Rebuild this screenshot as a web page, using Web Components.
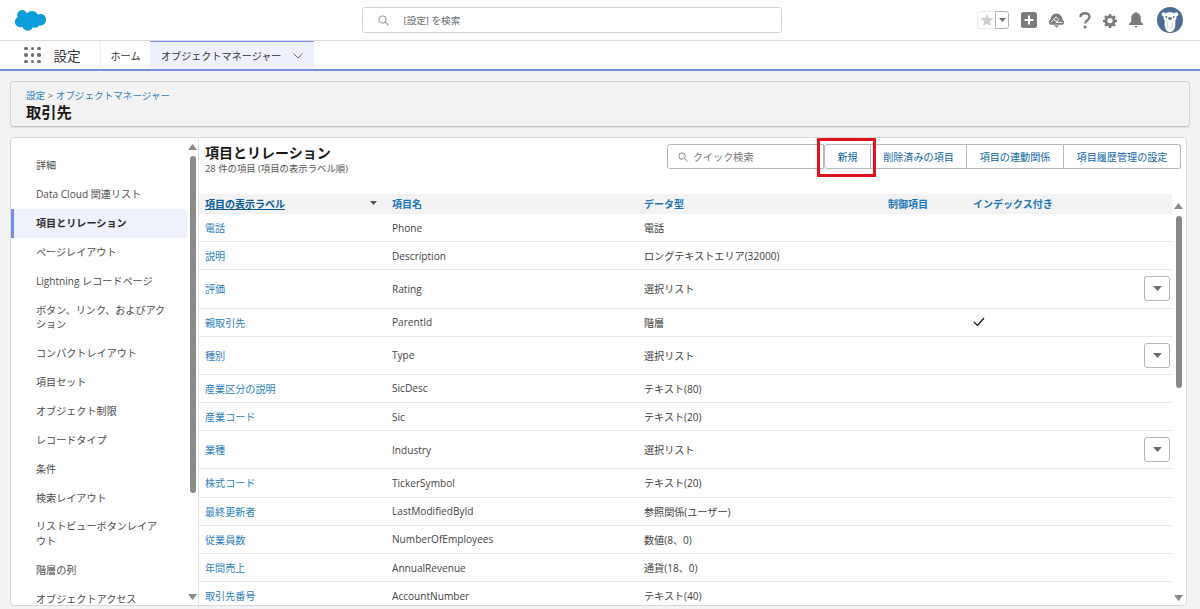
<!DOCTYPE html>
<html lang="ja"><head><meta charset="utf-8">
<style>
html,body{margin:0;padding:0;height:609px;overflow:hidden;background:#f3f3f3;}
body{font-family:"Open Sans","Noto Sans CJK JP",sans-serif;font-size:10.1px;color:#3e3e3c;}
</style></head><body>
<sf-header></sf-header>
<sf-nav></sf-nav>
<sf-title></sf-title>
<sf-main>
<sf-side>
<sf-item>詳細</sf-item>
<sf-item>Data Cloud 関連リスト</sf-item>
<sf-item active>項目とリレーション</sf-item>
<sf-item>ページレイアウト</sf-item>
<sf-item>Lightning レコードページ</sf-item>
<sf-item>ボタン、リンク、およびアク<br>ション</sf-item>
<sf-item>コンパクトレイアウト</sf-item>
<sf-item>項目セット</sf-item>
<sf-item>オブジェクト制限</sf-item>
<sf-item>レコードタイプ</sf-item>
<sf-item>条件</sf-item>
<sf-item>検索レイアウト</sf-item>
<sf-item>リストビューボタンレイア<br>ウト</sf-item>
<sf-item>階層の列</sf-item>
<sf-item>オブジェクトアクセス</sf-item>
</sf-side>
<sf-scroll style="--h:337px;--w:6px;--gap:6px;margin:6px 0 5px 0"></sf-scroll>
<sf-content>
<sf-table>
<sf-row l="電話" n="Phone" t="電話"></sf-row>
<sf-row l="説明" n="Description" t="ロングテキストエリア(32000)"></sf-row>
<sf-row tall l="評価" n="Rating" t="選択リスト"></sf-row>
<sf-row chk l="親取引先" n="ParentId" t="階層"></sf-row>
<sf-row tall l="種別" n="Type" t="選択リスト"></sf-row>
<sf-row l="産業区分の説明" n="SicDesc" t="テキスト(80)"></sf-row>
<sf-row l="産業コード" n="Sic" t="テキスト(20)"></sf-row>
<sf-row tall l="業種" n="Industry" t="選択リスト"></sf-row>
<sf-row l="株式コード" n="TickerSymbol" t="テキスト(20)"></sf-row>
<sf-row l="最終更新者" n="LastModifiedById" t="参照関係(ユーザー)"></sf-row>
<sf-row l="従業員数" n="NumberOfEmployees" t="数値(8、0)"></sf-row>
<sf-row l="年間売上" n="AnnualRevenue" t="通貨(18、0)"></sf-row>
<sf-row l="取引先番号" n="AccountNumber" t="テキスト(40)"></sf-row>
</sf-table>
</sf-content>
</sf-main>
<script>
function el(name,html){customElements.define(name,class extends HTMLElement{connectedCallback(){if(this.shadowRoot)return;const s=this.attachShadow({mode:'open'});s.innerHTML=typeof html==='function'?html(this):html;}});}
const tri=(c='#706e6b',w=7,h=4)=>`<svg width="${w}" height="${h}" viewBox="0 0 7 4"><path d="M0 0h7L3.5 4z" fill="${c}"/></svg>`;
el('sf-header',`<style>
:host{display:flex;height:40px;background:#fff;border-bottom:1px solid #dcdcdc;box-sizing:content-box;align-items:center;position:relative}
.logo{margin-left:14px;width:32px;height:22px;flex:none}
.mid{flex:1;display:flex;justify-content:center;padding-left:120px;box-sizing:border-box}
.search{width:420px;height:26px;box-sizing:border-box;border:1px solid #d4d4d4;border-radius:3px;display:flex;align-items:center;padding-left:15px;gap:15px;color:#6b6b6b;font-size:9.6px}
.tools{display:flex;align-items:center;margin-right:17px;flex:none}
.fav{display:flex;width:32px;height:18px;margin-right:12px}
.star{width:18px;height:18px;border:1px solid #ececec;border-right:0;border-radius:3px 0 0 3px;box-sizing:border-box;display:flex;align-items:center;justify-content:center}
.dd{width:14px;height:18px;border:1px solid #b5b5b5;border-radius:0 3px 3px 0;box-sizing:border-box;display:flex;align-items:center;justify-content:center}
svg{display:block;flex:none}
</style>
<svg class="logo" viewBox="0 0 32 22"><path fill="#0d9dda" d="M13 4.500C14.200 3 16 2 18 2c2.600 0 4.900 1.500 5.900 3.600.9-.4 1.800-.6 2.800-.6 3.400 0 5.300 2.600 5.300 5.700s-2.400 5.800-5.700 5.800c-.5 0-.9 0-1.300-.1-.8 1.400-2.400 2.400-4.200 2.400-.8 0-1.500-.2-2.100-.5-.8 2-2.800 3.400-5 3.400-2.400 0-4.400-1.500-5.200-3.600-.3.1-.7.1-1 .1C3.600 18.200 1 16 .9 12.900c0-2 1.100-3.800 2.700-4.800C3.300 7.400 3.200 6.600 3.200 5.900 3.200 3.100 5.500.9 8.300.9 10.200.9 11.900 2.300 13 4.500z"/></svg>
<div class="mid"><div class="search"><svg width="11" height="11" viewBox="0 0 11 11" fill="none" stroke="#9a9a9a" stroke-width="1.100"><circle cx="4.500" cy="4.500" r="3.500"/><path d="M7.200 7.200L10.500 10.500"/></svg><span>[設定] を検索</span></div></div>
<div class="tools">
<div class="fav"><div class="star"><svg width="14" height="14" viewBox="0 0 24 24"><path fill="#cfcfcf" d="M12 1.500l3.200 7.200 7.800.8-5.900 5.200 1.700 7.700L12 18.400l-6.800 4 1.700-7.700L1 9.500l7.800-.8z"/></svg></div><div class="dd">${tri('#6f6f6f')}</div></div>
<svg width="16" height="16" viewBox="0 0 16 16" style="margin-right:12px"><rect width="16" height="16" rx="2.500" fill="#7b7b7b"/><path d="M8 3.500v9M3.500 8h9" stroke="#fff" stroke-width="2"/></svg>
<svg width="15" height="15" viewBox="0 0 16 15" style="margin-right:15px"><path fill="#7b7b7b" d="M8 0c3.500 0 6 3 6.700 7 .8.500 1.300 1.400 1.300 2.500 0 1.500-1 2.500-2.200 2.500H2.200C1 12 0 11 0 9.500 0 8.400.5 7.500 1.300 7 2 3 4.500 0 8 0z"/><path fill="none" stroke="#fff" stroke-width="1" d="M2 9.500l5.500-6 3 3.200-3.200 2.800h7M5.200 6.500l4.800 3"/><path fill="#7b7b7b" d="M5 12.800h6L8 15z"/></svg>
<svg width="12" height="17" viewBox="0 0 12 17" style="margin-right:12px"><path fill="none" stroke="#7b7b7b" stroke-width="2.400" d="M1.500 5C1.500 2.700 3.500 1.300 6 1.300s4.500 1.400 4.500 3.600c0 3.100-4.300 3.300-4.300 6.600"/><circle cx="6.100" cy="15" r="1.600" fill="#7b7b7b"/></svg>
<svg width="14" height="15" viewBox="0 0 24 24" style="margin-right:12px"><path fill="#7b7b7b" fill-rule="evenodd" d="M10 1h4l.6 3 1.900.8 2.600-1.700 2.800 2.800-1.700 2.600.8 1.900 3 .6v4l-3 .6-.8 1.900 1.700 2.600-2.800 2.800-2.600-1.700-1.900.8-.6 3h-4l-.6-3-1.900-.8-2.600 1.700-2.800-2.800 1.700-2.600-.8-1.900-3-.6v-4l3-.6.8-1.900-1.700-2.600 2.800-2.800 2.600 1.700 1.900-.8zM12 7.500a4.500 4.500 0 1 0 0 9 4.500 4.500 0 0 0 0-9z"/></svg>
<svg width="14" height="16" viewBox="0 0 14 16" style="margin-right:14px"><path fill="#7b7b7b" d="M7 0c.7 0 1.200.5 1.200 1.100C10.500 1.700 11.800 3.500 11.800 6v3.500L14 12v1H0v-1l2.200-2.500V6C2.200 3.500 3.500 1.700 5.800 1.100 5.800.5 6.300 0 7 0zM5.500 14h3c0 .8-.7 1.600-1.500 1.600S5.500 14.800 5.500 14z"/></svg>
<svg width="26" height="26" viewBox="0 0 26 26"><circle cx="13" cy="13" r="13" fill="#4d6b93"/><circle cx="6.800" cy="7.300" r="2.100" fill="#fff"/><circle cx="19.200" cy="7.300" r="2.100" fill="#fff"/><path fill="#fff" d="M13 5c3.700 0 6.500 3 6.500 5.800 0 1-.5 1.900-1.200 2.600V18c0 3.600-2.200 7.200-5.300 7.200S7.700 21.600 7.700 18v-4.600C7 12.700 6.500 11.800 6.500 10.800 6.500 8 9.300 5 13 5z"/><circle cx="9.300" cy="10" r="1" fill="#4d6b93"/><circle cx="16.700" cy="10" r="1" fill="#4d6b93"/><path fill="#4d6b93" d="M11 11.300c0-.7.9-1.100 2-1.100s2 .4 2 1.100-1.200 1.700-2 1.700-2-1-2-1.700z"/><path fill="none" stroke="#b9c6d6" stroke-width=".8" d="M10 14.500c.2 4.500 1.300 6.500 3 6.500s2.800-2 3-6.500"/></svg>
</div>`);
el('sf-nav',`<style>
:host{display:flex;height:28px;background:#fff;border-bottom:2px solid #7a8ee6;align-items:stretch}
.app{width:101px;box-sizing:border-box;padding-left:24px;display:flex;align-items:center;gap:13px;border-right:1px solid #efefef;font-size:13.6px;color:#333;flex:none}
.grid{display:grid;grid-template-columns:repeat(3,3.5px);gap:3px}
.grid i{width:3.5px;height:3.5px;border-radius:50%;background:#706e6b}
.t{display:flex;align-items:center;color:#333;font-size:10.1px;white-space:nowrap}
.home{width:49px;justify-content:center;box-sizing:border-box}
.om{background:#eef1fb;border-top:1px solid #7a8ee6;width:164px;box-sizing:border-box;padding:0 11px;justify-content:space-between}
</style>
<div class="app"><div class="grid"><i></i><i></i><i></i><i></i><i></i><i></i><i></i><i></i><i></i></div><span>設定</span></div>
<div class="t home">ホーム</div>
<div class="t om"><span>オブジェクトマネージャー</span><svg width="10" height="6" viewBox="0 0 10 6" fill="none" stroke="#6b6b6b" stroke-width="1"><path d="M.5.5L5 5 9.500.5"/></svg></div>`);
el('sf-title',`<style>
:host{display:block;margin:10px;height:46px;box-sizing:border-box;border:1px solid #d5d5d5;border-bottom-color:#c4c4c4;border-radius:4px;background:#f3f3f3;padding:7px 15px 0;box-shadow:0 1px 1px rgba(0,0,0,.08)}
.c{font-size:9.6px;line-height:13px;color:#5b5b5b}
a{color:#2e7fbf;text-decoration:none}
.h{font-size:15.3px;font-weight:700;color:#181818;line-height:20px}
</style><div class="c"><a>設定</a> &gt; <a>オブジェクトマネージャー</a></div><div class="h">取引先</div>`);
el('sf-btn',`<style>
:host{display:flex;align-items:center;justify-content:center;height:25px;box-sizing:border-box;border:1px solid #b8b8b8;border-left:0;color:#0f66a8;font-size:10.1px;background:#fff;white-space:nowrap}
</style><slot></slot>`);
el('sf-side',`<style>
:host{display:flex;flex-direction:column;padding-top:13px;box-sizing:border-box;width:176px;flex:none;overflow:hidden}
</style><slot></slot>`);
el('sf-item',`<style>
:host{display:block;padding:7.1px 10px 7.1px 25px;line-height:14.7px;color:#4b4b4b;font-size:10.1px;flex:none;white-space:nowrap}
:host([active]){background:#eff2fb;box-shadow:inset 3px 0 0 #7a8ee6;font-weight:700;color:#2b2b2b}
</style><slot></slot>`);
el('sf-scroll',`<style>
:host{display:flex;flex-direction:column;align-items:center;width:11px;flex:none}
.up,.down{line-height:0;flex:none}
.track{flex:1;width:100%;padding-top:var(--gap,4px);box-sizing:border-box;display:flex;justify-content:center}
.thumb{width:var(--w,7px);height:var(--h,100px);background:#8a8a8a;border-radius:4px}
</style><div class="up"><svg width="9" height="6" viewBox="0 0 9 6"><path d="M4.5 0L9 6H0z" fill="#8a8a8a"/></svg></div><div class="track"><div class="thumb"></div></div><div class="down"><svg width="9" height="6" viewBox="0 0 9 6"><path d="M4.5 6L9 0H0z" fill="#8a8a8a"/></svg></div>`);
el('sf-row',h=>`<style>
:host{display:grid;grid-template-columns:187px 252px 244px 85px 1fr 28px;align-items:center;box-sizing:border-box;height:${h.hasAttribute('tall')?38.1:28.22}px;border-bottom:1px solid #e8e8e8;padding-left:6px;font-size:10.1px;color:#3e3e3c;flex:none}
.l{color:#2e7fbf}
.n{color:#444}
.b{width:26px;height:25px;box-sizing:border-box;border:1px solid #b5b5b5;border-radius:3px;display:flex;align-items:center;justify-content:center}
svg{display:block}
</style><div class="l">${h.getAttribute('l')}</div><div class="n">${h.getAttribute('n')}</div><div>${h.getAttribute('t')}</div><div></div><div>${h.hasAttribute('chk')?'<svg width="12" height="10" viewBox="0 0 12 10" fill="none" stroke="#222" stroke-width="1.400"><path d="M1 5l3.500 3.500L11 1"/></svg>':''}</div><div>${h.hasAttribute('tall')?`<div class="b">${tri('#6b6b6b',9,5)}</div>`:''}</div>`);
el('sf-table',`<style>
:host{display:flex;flex-direction:column;flex:1;min-width:0;overflow:hidden}
.hd{display:grid;grid-template-columns:187px 252px 244px 85px 1fr;align-items:center;height:20px;box-sizing:border-box;padding:0 0 2px 6px;background:#f3f3f3;font-size:10px;font-weight:700;color:#1b75bb;flex:none}
.first{display:flex;justify-content:space-between;align-items:center;padding-right:15px}
.first u{color:#0b5a96}
</style><div class="hd"><div class="first"><u>項目の表示ラベル</u>${tri('#555')}</div><div>項目名</div><div>データ型</div><div>制御項目</div><div>インデックス付き</div></div><slot></slot>`);
el('sf-content',`<style>
:host{display:flex;flex-direction:column;flex:1;min-width:0;border-left:1px solid #e3e3e3}
.top{height:56px;flex:none;display:flex;justify-content:space-between;padding:6px 5px 0 6px;box-sizing:border-box;position:relative}
h2{margin:0;font-size:14px;font-weight:700;color:#181818;line-height:18px}
.s{font-size:9.4px;color:#555;line-height:12px;margin-top:1px}
.acts{display:flex;height:25px}
.q{width:157px;height:25px;box-sizing:border-box;border:1px solid #b5b5b5;border-radius:3px 0 0 3px;display:flex;align-items:center;padding-left:10px;gap:5px;color:#7a7a7a;font-size:10.1px}
.mark{position:absolute;left:618px;top:0;width:59px;height:39px;box-sizing:border-box;border:3px solid #e1131f;pointer-events:none}
.body{flex:1;display:flex;min-height:0;overflow:hidden}
.tbl{flex:1;min-width:0;display:flex}
svg{display:block;flex:none}
</style>
<div class="top"><div><h2>項目とリレーション</h2><div class="s">28 件の項目 (項目の表示ラベル順)</div></div>
<div class="acts"><div class="q"><svg width="10" height="10" viewBox="0 0 11 11" fill="none" stroke="#8a8a8a" stroke-width="1.100"><circle cx="4.500" cy="4.500" r="3.500"/><path d="M7.200 7.200L10.500 10.500"/></svg><span>クイック検索</span></div><sf-btn style="border-left:1px solid #b8b8b8;border-radius:3px 0 0 3px;width:47px">新規</sf-btn><sf-btn style="width:96px">削除済みの項目</sf-btn><sf-btn style="width:97px">項目の連動関係</sf-btn><sf-btn style="width:117px;border-radius:0 3px 3px 0">項目履歴管理の設定</sf-btn></div>
<div class="mark"></div></div>
<div class="body"><div class="tbl"><slot></slot></div><sf-scroll style="--h:172px;--w:6px;--gap:7px;margin:9px 2px 4px 1px"></sf-scroll></div>`);
el('sf-main',`<style>
:host{display:flex;margin:0 13px 0 10px;height:469px;box-sizing:border-box;background:#fff;border:1px solid #d8d8d8;border-radius:4px;overflow:hidden}
</style><slot></slot>`);
</script>
</body></html>
